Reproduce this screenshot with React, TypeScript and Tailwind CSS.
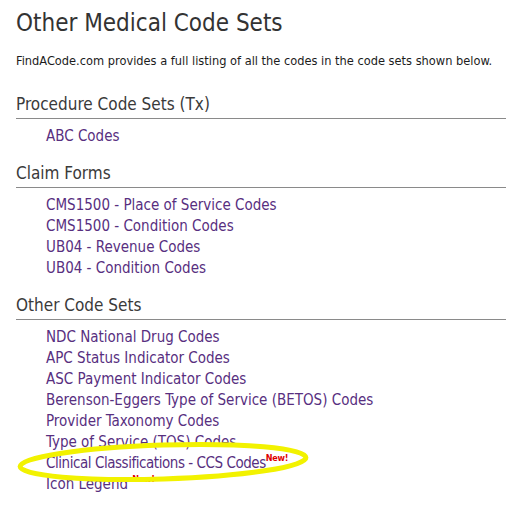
import React from "react";

const sections = [
  { title: "Procedure Code Sets (Tx)", links: [{ label: "ABC Codes" }] },
  {
    title: "Claim Forms",
    links: [
      { label: "CMS1500 - Place of Service Codes" },
      { label: "CMS1500 - Condition Codes" },
      { label: "UB04 - Revenue Codes" },
      { label: "UB04 - Condition Codes" },
    ],
  },
  {
    title: "Other Code Sets",
    links: [
      { label: "NDC National Drug Codes" },
      { label: "APC Status Indicator Codes" },
      { label: "ASC Payment Indicator Codes" },
      { label: "Berenson-Eggers Type of Service (BETOS) Codes" },
      { label: "Provider Taxonomy Codes" },
      { label: "Type of Service (TOS) Codes" },
      { label: "Clinical Classifications - CCS Codes", isNew: true, circled: true },
      { label: "Icon Legend ", isNew: true },
    ],
  },
];

const NewBadge = () => (
  <span className="relative -top-[7px] text-[9px] font-bold leading-none tracking-[-0.3px] text-[#e00000]">New!</span>
);

export default function App() {
  return (
    <div className="h-[506px] w-[506px] overflow-hidden bg-white pl-4 pt-[9px] font-['DejaVu_Sans_Condensed','DejaVu_Sans',sans-serif]">
      <h1 className="text-[24px] leading-[28px] text-[#333]">Other Medical Code Sets</h1>
      <p className="mt-[16px] text-[12.7px] leading-[16px] text-[#1c1c1c]">
        FindACode.com provides a full listing of all the codes in the code sets shown below.
      </p>
      <div className="mt-[25px] flex flex-col gap-[16px]">
        {sections.map((s) => (
          <div key={s.title}>
            <h2 className="border-b border-[#8a8a8a] pb-[4px] text-[17px] leading-[20px] text-[#3a3a3a]">{s.title}</h2>
            <ul className="mt-[7px] pl-[30px]">
              {s.links.map((l) => (
                <li
                  key={l.label}
                  className={
                    l.circled
                      ? "relative h-[21px] whitespace-nowrap text-[15px] leading-[21px] tracking-[-0.45px] text-[#582f7f]"
                      : "relative h-[21px] whitespace-nowrap text-[15px] leading-[21px] text-[#582f7f]"
                  }
                >
                  {l.label}
                  {l.isNew && <NewBadge />}
                  {l.circled && (
                    <svg
                      className="pointer-events-none absolute left-[-30px] top-[-15px] z-10"
                      width="300"
                      height="50"
                      viewBox="0 0 300 50"
                    >
                      <ellipse cx="147" cy="24" rx="143" ry="17" fill="none" stroke="#f2f200" strokeWidth="5" transform="rotate(-1.8 147 24)" />
                    </svg>
                  )}
                </li>
              ))}
            </ul>
          </div>
        ))}
      </div>
    </div>
  );
}
